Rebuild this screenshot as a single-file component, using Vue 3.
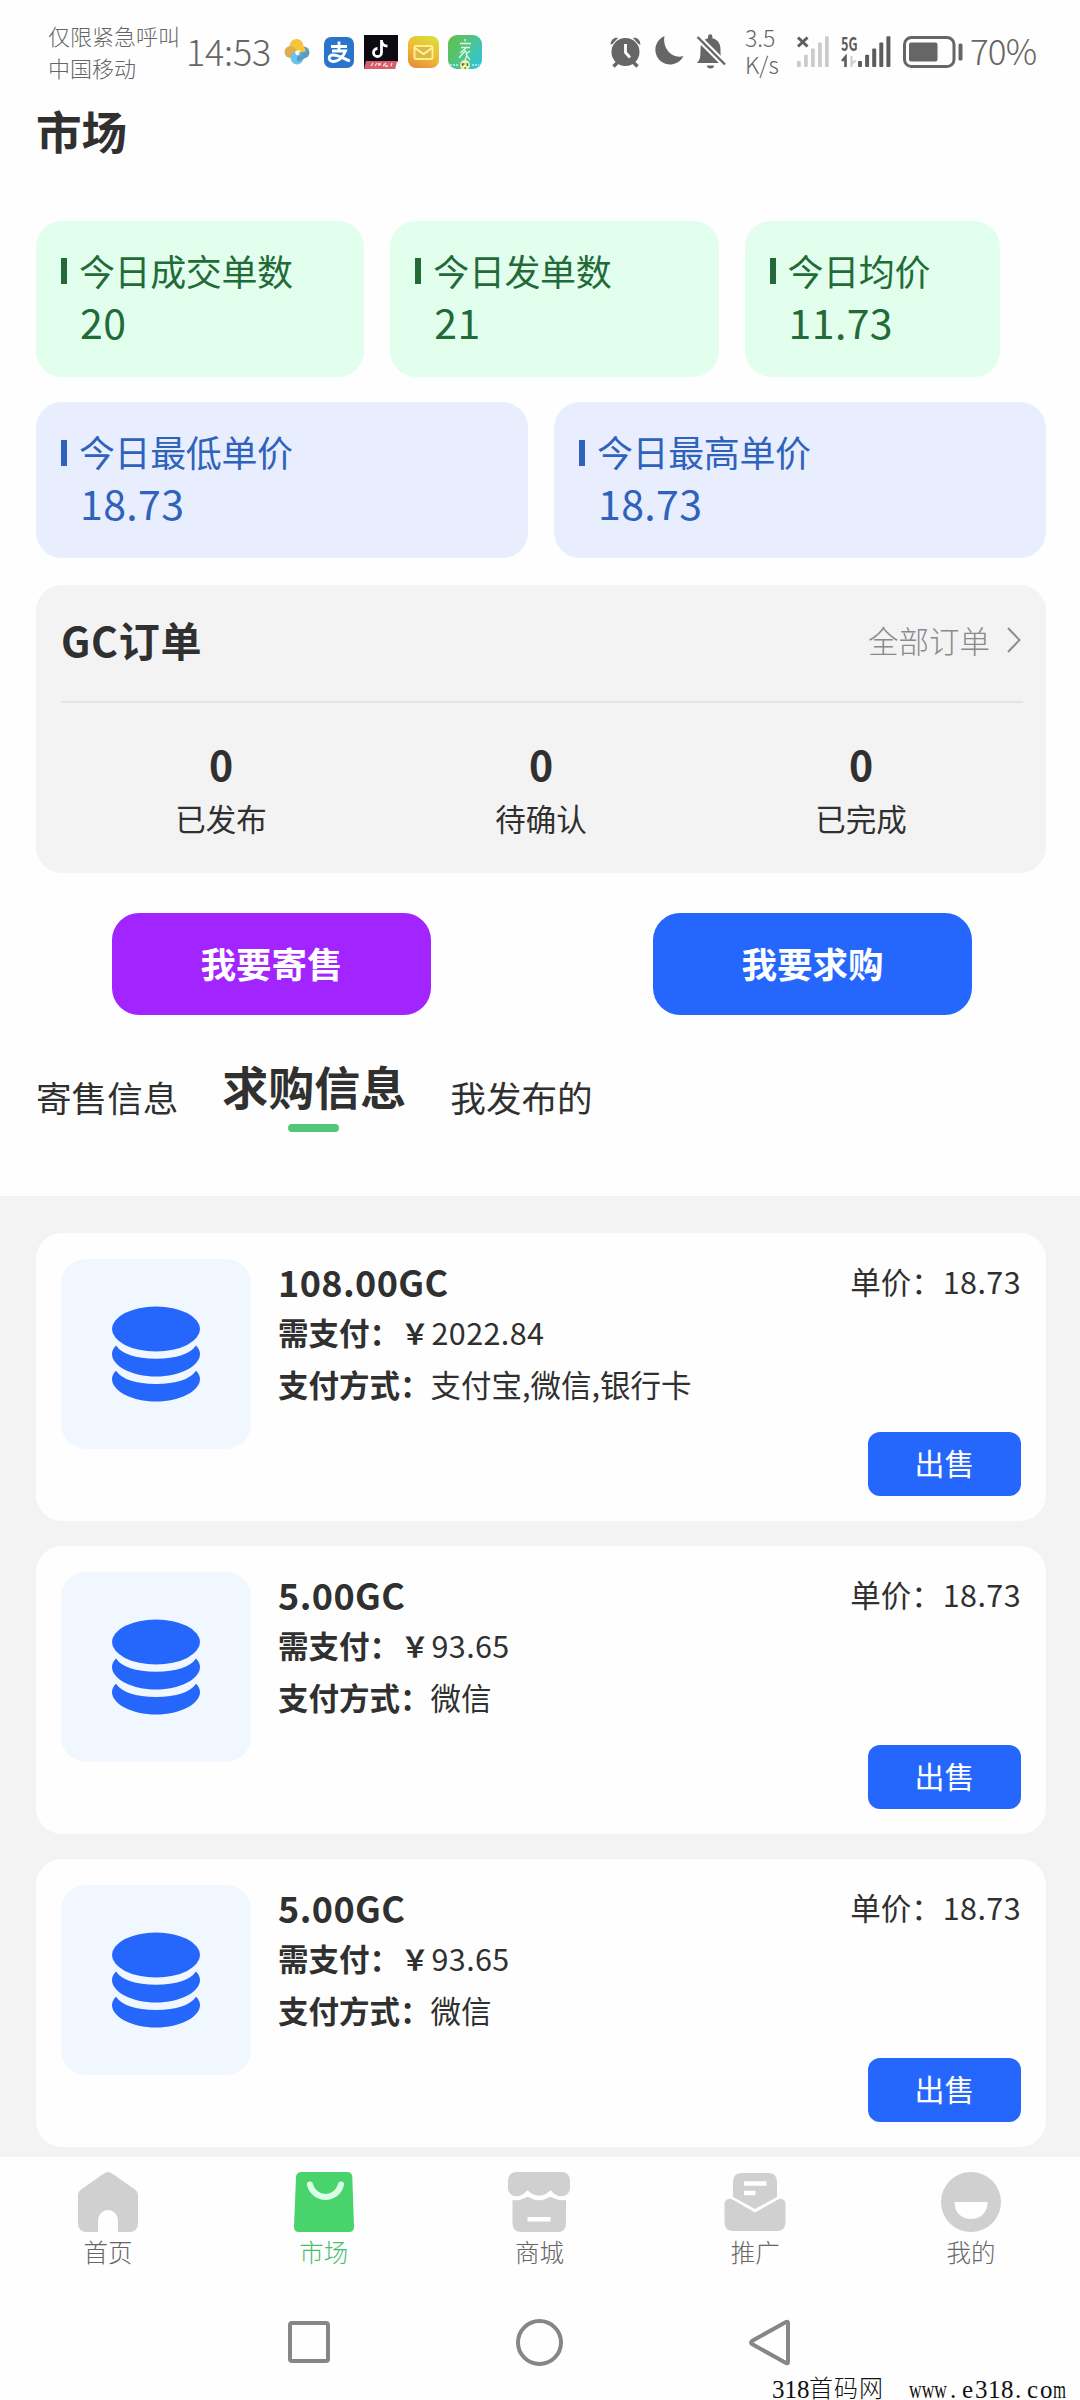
<script setup>
const greenStats = [
  { label: '今日成交单数', value: '20' },
  { label: '今日发单数', value: '21' },
  { label: '今日均价', value: '11.73' },
]
const blueStats = [
  { label: '今日最低单价', value: '18.73' },
  { label: '今日最高单价', value: '18.73' },
]
const counts = [
  { label: '已发布', value: 0 },
  { label: '待确认', value: 0 },
  { label: '已完成', value: 0 },
]
const offers = [
  { amount: '108.00GC', pay: '2022.84', methods: '支付宝,微信,银行卡', price: '18.73' },
  { amount: '5.00GC', pay: '93.65', methods: '微信', price: '18.73' },
  { amount: '5.00GC', pay: '93.65', methods: '微信', price: '18.73' },
]
const bars = [0, 1, 2, 3, 4]
</script>

<template>
  <div class="page">
    <header class="status">
      <div class="carrier"><span>仅限紧急呼叫</span><span>中国移动</span></div>
      <div class="clock">14:53</div>
      <div class="apps">
        <svg class="pin" width="26" height="28" viewBox="0 0 26 28">
          <circle cx="19.500" cy="14.500" r="6" fill="#5b9bc4" />
          <circle cx="12.500" cy="8" r="7" fill="#f4c63c" />
          <circle cx="6.500" cy="14" r="6" fill="#dcae50" />
          <circle cx="13" cy="20" r="6.500" fill="#6cc2ec" />
          <path d="M12 8a7 7 0 0 1 7 6" stroke="#f4c63c" stroke-width="6" fill="none" />
          <path d="M20 14a7 7 0 0 1-7 7" stroke="#5b9bc4" stroke-width="5" fill="none" />
          <path d="M11 13.500L16 12L14.500 17L12 17z" fill="#fff" />
        </svg>
        <svg class="ali" width="30" height="31" viewBox="0 0 30 31">
          <rect width="30" height="31" rx="7" fill="#2a74cb" />
          <path d="M7 9.500h16M15 4.500v9M8 14h13.500c-2 5-6.500 10.500-11.500 10.500-6 0-6.500-6.500-1-6.500 6 0 11 4 17 6" stroke="#fff" stroke-width="2.800" fill="none" />
        </svg>
        <svg class="tik" width="34" height="34" viewBox="0 0 34 34">
          <rect width="34" height="34" fill="#0d0a14" />
          <path d="M17.500 5v12.500a4 4 0 1 1-4-4M17.500 6c.5 3 2.500 5 6 5.200" stroke="#fff" stroke-width="2.800" fill="none" />
          <path d="M2 26h32l-3 8H0z" fill="#d5606c" />
          <path d="M31 34l2-7h1v7z" fill="#fff" />
          <path d="M7 31l2-3m2 3l2-3m1 1h3m-2 2v-3m4 3l3-3m-1 3h3m3 0l1-3" stroke="#fbdfe2" stroke-width="1.300" fill="none" />
        </svg>
        <svg class="mail" width="31" height="32" viewBox="0 0 31 32">
          <defs><linearGradient id="gm" x1=".7" y1="0" x2=".2" y2="1"><stop offset="0" stop-color="#dcdc38" /><stop offset=".5" stop-color="#eeb936" /><stop offset="1" stop-color="#e88c3c" /></linearGradient></defs>
          <rect width="31" height="32" rx="8" fill="url(#gm)" />
          <rect x="6.500" y="10" width="18" height="13" rx="1.500" fill="#dfb743" stroke="#fdf090" stroke-width="2" />
          <path d="M7 12l8.500 6 8.500-6" stroke="#fdf3a4" stroke-width="2" fill="none" />
        </svg>
        <svg class="home-app" width="34" height="35" viewBox="0 0 34 35">
          <defs><linearGradient id="gh" x1="0" y1=".2" x2="1" y2=".8"><stop offset="0" stop-color="#61c04d" /><stop offset=".55" stop-color="#4cc591" /><stop offset="1" stop-color="#2fc3dd" /></linearGradient></defs>
          <rect width="34" height="34" rx="9" fill="url(#gh)" />
          <path d="M17 4v2.500M12 8.500h11M13 12.500h9M18 13l-6 5M17 16l-6 7M17 15c2 3 2 7 0 10M22 16l-4 3 4 6" stroke="#dff8dd" stroke-width="1.300" fill="none" />
          <circle cx="17" cy="30" r="5" fill="#eef3b5" />
          <path d="M14.500 31v-2h2m2 0h1v2m-3 2h1.500" stroke="#59672e" stroke-width="1.400" fill="none" />
          <path d="M2 30h8m14 0h7" stroke="#9be8d8" stroke-width="2" stroke-dasharray="2 1" />
        </svg>
      </div>
      <div class="system">
        <svg class="alarm" width="31" height="32" viewBox="0 0 31 32" fill="#666">
          <circle cx="15.500" cy="16" r="14" />
          <path d="M7.500 26.500l-4 4M23.500 26.500l4 4" stroke="#666" stroke-width="3.500" />
          <path d="M0 9C0 4 4 0 9 1.500L2 9zM31 9c0-5-4-9-9-7.500L29 9z" stroke="#fff" stroke-width="1" />
          <path d="M15.500 8v8.500l4.500 5" stroke="#fff" stroke-width="2.800" fill="none" />
        </svg>
        <svg class="moon" width="30" height="32" viewBox="0 0 30 32"><path d="M10.500 0A14.800 14.800 0 1 0 29.500 20C19 23.500 8 13 10.500 0z" fill="#666" /></svg>
        <svg class="bell" width="29" height="34" viewBox="0 0 29 34">
          <path d="M0 28c3-3 3.500-6 3.500-14C3.500 8 7 4 11 3.200V1.500a2.200 2.200 0 0 1 4.400 0v1.700C20 4 23.500 8 23.500 14c0 8 .5 11 3.500 14zM10 30.500h7a3.500 3 0 0 1-7 0z" fill="#666" />
          <path d="M1.500 3L29 30.500" stroke="#fff" stroke-width="6.500" />
          <path d="M.5 2L28 29.500" stroke="#666" stroke-width="2.400" />
        </svg>
        <div class="speed"><span>3.5</span><span>K/s</span></div>
        <svg class="sig1" width="32" height="32" viewBox="0 0 32 32">
          <path d="M1 1.500l9.500 9M10.500 1.500l-9.500 9" stroke="#5c5c5c" stroke-width="3" />
          <rect v-for="b in bars" :key="b" :x="b * 7" :y="25 - b * 6.200" width="3.800" :height="6 + b * 6.200" rx="1" fill="#ccc" />
        </svg>
        <svg class="sig2" width="50" height="32" viewBox="0 0 50 32">
          <text x="0" y="14.500" textLength="16.500" lengthAdjust="spacingAndGlyphs" class="g5">5G</text>
          <path d="M1 25l3.500-4V31" stroke="#5c5c5c" stroke-width="2.600" fill="none" />
          <path d="M10.500 20v11M10.500 28l4-3.500" stroke="#ccc" stroke-width="2" fill="none" />
          <rect v-for="b in bars" :key="b" :x="17 + b * 7.100" :y="25 - b * 6.200" width="4" :height="6 + b * 6.200" rx="1" fill="#5c5c5c" />
        </svg>
        <svg class="batt" width="60" height="32" viewBox="0 0 60 32">
          <rect x="1.500" y="1.500" width="49.500" height="29" rx="7" fill="none" stroke="#666" stroke-width="3" />
          <rect x="6" y="6.500" width="28.500" height="19" rx="2" fill="#666" />
          <rect x="55.500" y="7.500" width="4" height="17" rx="1.500" fill="#666" />
        </svg>
        <div class="pct">70%</div>
      </div>
    </header>

    <h1 class="title">市场</h1>

    <section class="stats green">
      <div v-for="s in greenStats" :key="s.label" class="stat">
        <div class="stat-label"><i></i>{{ s.label }}</div>
        <div class="stat-value">{{ s.value }}</div>
      </div>
    </section>
    <section class="stats blue">
      <div v-for="s in blueStats" :key="s.label" class="stat">
        <div class="stat-label"><i></i>{{ s.label }}</div>
        <div class="stat-value">{{ s.value }}</div>
      </div>
    </section>

    <section class="orders">
      <div class="orders-head">
        <h2>GC订单</h2>
        <a class="all">全部订单<svg width="14" height="26" viewBox="0 0 14 26"><path d="M1 1l11.500 12L1 25" fill="none" stroke="#8e8e8e" stroke-width="2" /></svg></a>
      </div>
      <div class="counts">
        <div v-for="c in counts" :key="c.label"><b>{{ c.value }}</b><span>{{ c.label }}</span></div>
      </div>
    </section>

    <section class="actions">
      <div><button class="sell">我要寄售</button></div>
      <div><button class="buy">我要求购</button></div>
    </section>

    <nav class="tabs">
      <span>寄售信息</span>
      <span class="active">求购信息<i></i></span>
      <span>我发布的</span>
    </nav>

    <main class="list">
      <article v-for="(o, i) in offers" :key="i" class="offer">
        <div class="thumb">
          <svg width="90" height="96" viewBox="0 0 90 96" fill="#2567fd">
            <ellipse cx="45" cy="23" rx="44" ry="22.500" />
            <path d="M5 39.500Q14 52.500 45 52.800Q76 52.500 85 39.500C87.500 42 89 45 89 48C89 60 69 70.500 45 70.500S1 60 1 48C1 45 2.500 42 5 39.500z" />
            <path d="M5 64.700Q14 77.700 45 78Q76 77.700 85 64.700C87.500 67 89 70 89 73C89 85 69 95.500 45 95.500S1 85 1 73C1 70 2.500 67 5 64.700z" />
          </svg>
        </div>
        <div class="info">
          <h3>{{ o.amount }}</h3>
          <p><b>需支付：<em>￥</em></b><span class="num">{{ o.pay }}</span></p>
          <p class="methods"><b>支付方式：</b>{{ o.methods }}</p>
        </div>
        <div class="side">
          <div class="price">单价：<span class="num">{{ o.price }}</span></div>
          <button>出售</button>
        </div>
      </article>
    </main>

    <footer class="tabbar">
      <div>
        <svg width="60" height="60" viewBox="0 0 60 60" fill="#d0d0d0"><path d="M26 1.500Q30-1.500 34 1.500L57 17.500Q60 20 60 23V51Q60 60 51 60H40V48A10 10 0 0 0 20 48V60H9Q0 60 0 51V23Q0 20 3 17.500z" /></svg>
        <span>首页</span>
      </div>
      <div class="on">
        <svg width="60" height="60" viewBox="0 0 60 60"><path d="M8 0H53Q58 0 58.300 5L60 55Q60 60 55 60H5Q0 60 0 55L2 5Q2.500 0 8 0z" fill="#48d36d" /><path d="M16 12.500C20 29 43 29 47 12.500" stroke="#d9ffe4" stroke-width="6" stroke-linecap="round" fill="none" /></svg>
        <span>市场</span>
      </div>
      <div>
        <svg width="62" height="60" viewBox="0 0 62 60" fill="#d0d0d0"><path d="M9 0H53Q62 0 62 9V16C62 24 51 28 44 19.500Q42.500 17.500 41 19.500C36 25 26 25 21 19.500Q19.500 17.500 18 19.500C11 28 0 24 0 16V9Q0 0 9 0zM4.500 28Q11.500 29 18 25.500Q19.500 24.500 21 25.500Q31 31 41 25.500Q42.500 24.500 44 25.500Q51 29 58 28V51Q58 60 50 60H13Q4.500 60 4.500 51z" /><rect x="19.500" y="45" width="23" height="4.500" fill="#fff" /></svg>
        <span>商城</span>
      </div>
      <div>
        <svg width="62" height="60" viewBox="0 0 62 60" fill="#d0d0d0"><path d="M18 1H44Q53 1 53 10V25L31 37L9 25V10Q9 1 18 1z" /><path d="M8.500 27.500L31 40.500L54 27.500C58 26 61.500 28 61.500 32V50Q61.500 59 53 59H9Q.5 59 .5 50V32C.5 28 4 26 8.500 27.500z" /><path d="M20 11.500H42.500M20 21H31.500" stroke="#fff" stroke-width="4.500" /></svg>
        <span>推广</span>
      </div>
      <div>
        <svg width="60" height="60" viewBox="0 0 60 60"><circle cx="30" cy="30" r="30" fill="#d0d0d0" /><path d="M13.500 30H46.500C46.500 40 40 47 30 47S13.500 40 13.500 30z" fill="#fff" /></svg>
        <span>我的</span>
      </div>
    </footer>

    <div class="sysnav">
      <svg width="42" height="42" viewBox="0 0 42 42"><rect x="2" y="2" width="38" height="38" rx="2" /></svg>
      <svg width="47" height="47" viewBox="0 0 47 47"><circle cx="23.500" cy="23.500" r="21.500" /></svg>
      <svg width="41" height="47" viewBox="0 0 41 47"><path d="M37 3Q39 2 39 4V43Q39 45 37 44L3 25Q1 23.500 3 22z" /></svg>
    </div>

    <svg class="mark" width="308" height="40" viewBox="0 0 308 40">
      <text x="1 13.500 26" y="34">318</text>
      <text x="38 63 88" y="32.500" class="cn">首码网</text>
      <text x="138" y="34" textLength="38" lengthAdjust="spacingAndGlyphs">www</text>
      <text x="179 191 204 217 230 244 256 269" y="34">.e318.co</text>
      <text x="282" y="34" textLength="13" lengthAdjust="spacingAndGlyphs">m</text>
    </svg>
  </div>
</template>

<style>
body { margin: 0; background: #fefefe; }
</style>

<style scoped>
* { box-sizing: border-box; }
.page {
  position: relative;
  width: 1080px;
  height: 2400px;
  overflow: hidden;
  display: flex;
  flex-direction: column;
  background: #fefefe;
  color: #303030;
  font-family: "Noto Sans CJK SC", "Noto Sans", sans-serif;
}
svg { display: block; flex: none; overflow: visible; }
h1, h2, h3, p { margin: 0; }
button { border: 0; padding: 0; color: #fff; font-family: inherit; display: flex; align-items: center; justify-content: center; }

.status { height: 99px; padding: 5px 0 0 48px; display: flex; align-items: center; color: #666; font-weight: 300; white-space: nowrap; }
.status > div { flex: none; }
.carrier { width: 138px; display: flex; flex-direction: column; font-size: 22px; line-height: 32px; margin-top: -2px; }
.clock { width: 98px; font-size: 36px; line-height: 40px; margin-top: -5px; letter-spacing: -.2px; }
.apps { display: flex; align-items: center; width: 326px; }
.ali { margin-left: 14px; }
.tik { margin-left: 10px; }
.mail { margin-left: 10px; }
.home-app { margin-left: 9px; }
.system { display: flex; align-items: center; }
.moon { margin-left: 13px; }
.bell { margin-left: 13px; }
.speed { margin-left: 19px; width: 52px; display: flex; flex-direction: column; font-size: 23px; line-height: 27px; margin-top: -2px; }
.sig2 { margin-left: 12px; }
.g5 { font: 700 19px "Noto Sans CJK SC", sans-serif; fill: #5c5c5c; }
.batt { margin-left: 12px; }
.pct { margin-left: 7px; font-size: 35px; line-height: 40px; margin-top: -5px; letter-spacing: -.9px; }

.title { margin-left: 36px; padding-top: 1px; font-size: 45.500px; line-height: 60px; font-weight: 700; }

.stats { display: flex; gap: 26px; padding: 0 34px 0 36px; }
.green { margin-top: 60.500px; }
.green .stat { width: 328.300px; background: #e2feed; color: #226b38; }
.green .stat:last-child { width: 255px; }
.blue { margin-top: 25.500px; }
.blue .stat { flex: 1; background: #e8eefe; color: #2f62bb; }
.stat { height: 156px; border-radius: 26px; padding: 31px 0 0 25px; }
.stat-label { display: flex; align-items: center; font-size: 36px; line-height: 36px; letter-spacing: -.4px; }
.stat-label i { width: 6px; height: 26px; margin: 3px 12px 0 0; background: currentColor; }
.stat-value { margin: 11px 0 0 19px; font-size: 41px; line-height: 44px; letter-spacing: .4px; }

.orders { height: 288px; margin: 27px 34px 0 36px; padding: 0 23px 0 25px; border-radius: 26px; background: #f3f3f3; }
.orders-head { height: 118px; padding-bottom: 9px; border-bottom: 2px solid #e4e4e4; display: flex; align-items: center; justify-content: space-between; }
.orders-head h2 { font-size: 41px; line-height: 48px; font-weight: 700; letter-spacing: .7px; }
.all { display: flex; align-items: center; gap: 17px; padding: 2px 2px 0 0; font-size: 30.500px; line-height: 36px; color: #8a8a8a; font-weight: 300; }
.counts { display: flex; margin-top: 36px; width: 960px; }
.counts div { flex: 1; display: flex; flex-direction: column; align-items: center; gap: 13px; }
.counts b { font-size: 41px; line-height: 48px; }
.counts span { font-size: 30.500px; line-height: 36px; }

.actions { display: flex; margin-top: 40px; padding-left: 1px; }
.actions div { width: 541px; display: flex; justify-content: center; flex: none; }
.actions button { width: 319px; height: 102px; padding-bottom: 4px; border-radius: 27px; font-size: 35.500px; font-weight: 700; }
.sell { background: #a224fe; }
.buy { background: #2567fd; }

.tabs { height: 181px; padding: 40px 36px 0; display: flex; align-items: flex-start; gap: 44px; font-size: 35.600px; line-height: 50px; }
.tabs span { margin-top: 17px; }
.tabs .active { margin-top: 0; font-size: 46px; line-height: 61px; font-weight: 700; display: flex; flex-direction: column; align-items: center; }
.tabs i { width: 51px; height: 8px; margin: 8px 2px 0 0; border-radius: 4px; background: #52c679; }

.list { height: 961px; padding: 37px 34px 0 36px; background: #f3f3f3; display: flex; flex-direction: column; gap: 25px; }
.offer { height: 288px; flex: none; padding: 26px 25px 25px; border-radius: 26px; background: #fefefe; display: flex; }
.thumb { width: 190px; height: 190px; border-radius: 25px; background: #f1f7fe; display: flex; align-items: center; justify-content: center; }
.info { flex: 1; margin-left: 27px; }
.info h3 { font-size: 36px; line-height: 44px; font-weight: 700; letter-spacing: .4px; }
.info p { height: 40px; margin-top: 9px; font-size: 30.500px; line-height: 40px; white-space: nowrap; }
.info .methods { margin-top: 12px; }
.info em { display: inline-block; width: 31.500px; padding-left: 1px; font-style: normal; font-size: 28px; line-height: 30px; }
.num { letter-spacing: .4px; }
.side { display: flex; flex-direction: column; align-items: flex-end; justify-content: space-between; }
.price { font-size: 30.500px; line-height: 44px; }
.price .num { margin-left: 1px; }
.side button { width: 153px; height: 64px; padding-bottom: 5px; border-radius: 12px; background: #2567fd; font-size: 30px; }

.tabbar { height: 134px; padding: 15px 1px 0 0; display: flex; }
.tabbar div { flex: 1; display: flex; flex-direction: column; align-items: center; gap: 3px; font-size: 24.500px; line-height: 34px; font-weight: 300; color: #666; }
.tabbar .on { color: #4dbb70; }

.sysnav { height: 102px; padding-left: 288px; display: flex; align-items: center; }
.sysnav svg { fill: none; stroke: #868686; stroke-width: 4; margin-right: 186px; }

.mark { position: absolute; left: 771px; top: 2364px; font: 25px "Liberation Serif", serif; fill: #111; }
.cn { font: 300 24px "Noto Sans CJK SC", sans-serif; }
</style>
